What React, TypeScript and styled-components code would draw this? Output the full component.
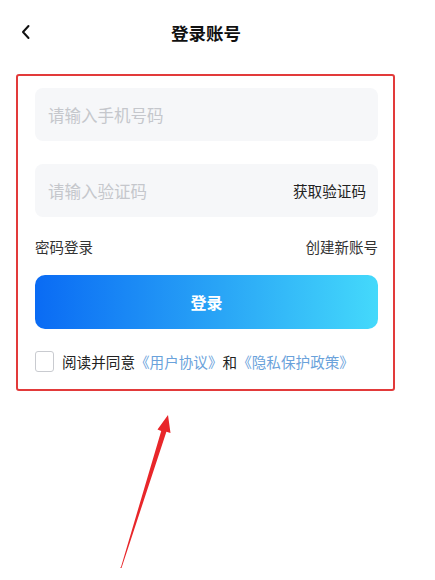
import styled, { createGlobalStyle } from "styled-components";

const GlobalStyle = createGlobalStyle`
  html, body {
    margin: 0;
    padding: 0;
    background: #ffffff;
    font-family: "Noto Sans CJK SC", "Noto Sans", sans-serif;
  }
`;

const BackIcon = () => (
  <svg width="12" height="16" viewBox="0 0 12 16" fill="none">
    <path d="M8.5 2 L3 8 L8.5 14" stroke="#111" strokeWidth="2" strokeLinecap="round" strokeLinejoin="round" />
  </svg>
);

const Arrow = () => (
  <ArrowLayer width="435" height="580" viewBox="0 0 435 580">
    <polygon
      points="120,568 121,567 161.2,431 157.5,429.5 168,415 170.5,433 166.4,431.8 121.5,568"
      fill="#e8262a"
    />
  </ArrowLayer>
);

const App = () => {
  return (
    <Page>
      <GlobalStyle />
      <Header>
        <BackButton>
          <BackIcon />
        </BackButton>
        <Title>登录账号</Title>
        <span />
      </Header>
      <Highlight>
        <Field>
          <Placeholder>请输入手机号码</Placeholder>
        </Field>
        <Field $gap>
          <Placeholder>请输入验证码</Placeholder>
          <CodeAction>获取验证码</CodeAction>
        </Field>
        <LinkRow>
          <span>密码登录</span>
          <span>创建新账号</span>
        </LinkRow>
        <LoginButton>登录</LoginButton>
        <Agreement>
          <Checkbox />
          <span>
            阅读并同意<Link>《用户协议》</Link>和<Link>《隐私保护政策》</Link>
          </span>
        </Agreement>
      </Highlight>
      <Arrow />
    </Page>
  );
};

export default App;

const Page = styled.div`
  position: relative;
  width: 435px;
  height: 580px;
  overflow: hidden;
  background: #fff;
`;

const Header = styled.div`
  display: grid;
  grid-template-columns: 40px 1fr 40px;
  align-items: center;
  width: 412px;
  height: 64px;
  box-sizing: border-box;
  padding-left: 14px;
`;

const BackButton = styled.div`
  display: flex;
  align-items: center;
  padding-left: 6px;
`;

const Title = styled.div`
  text-align: center;
  font-size: 17.5px;
  font-weight: 700;
  color: #111;
  margin-left: -14px;
`;

const Highlight = styled.div`
  margin: 10px 0 0 16px;
  width: 379px;
  box-sizing: border-box;
  border: 2px solid #e23a3a;
  border-radius: 3px;
  padding: 12px 15px 17px 17px;
  display: flex;
  flex-direction: column;
`;

const Field = styled.div<{ $gap?: boolean }>`
  height: 53px;
  margin-top: ${({ $gap }) => ($gap ? "23px" : "0")};
  border-radius: 8px;
  background: #f6f7f9;
  display: flex;
  align-items: center;
  justify-content: space-between;
  padding: 0 12px 0 13px;
`;

const Placeholder = styled.span`
  font-size: 16.5px;
  color: #c5c7cc;
`;

const CodeAction = styled.span`
  font-size: 14.6px;
  color: #222;
`;

const LinkRow = styled.div`
  margin-top: 20px;
  display: flex;
  justify-content: space-between;
  line-height: 20px;
  font-size: 14.5px;
  color: #333;
`;

const LoginButton = styled.div`
  margin-top: 18px;
  height: 54px;
  border-radius: 10px;
  background: linear-gradient(90deg, #0a6bf4 0%, #2aa6f6 55%, #44d9fb 100%);
  display: flex;
  align-items: center;
  justify-content: center;
  color: #fff;
  font-size: 16px;
  font-weight: 700;
`;

const Agreement = styled.div`
  margin-top: 22px;
  display: flex;
  align-items: center;
  gap: 8px;
  font-size: 14.6px;
  color: #222;
  line-height: 21px;
`;

const Checkbox = styled.span`
  width: 19px;
  height: 21px;
  box-sizing: border-box;
  border: 1px solid #c9cbd0;
  border-radius: 3px;
  background: #fff;
`;

const Link = styled.span`
  color: #6aa2db;
`;

const ArrowLayer = styled.svg`
  position: absolute;
  left: 0;
  top: 0;
  pointer-events: none;
`;
